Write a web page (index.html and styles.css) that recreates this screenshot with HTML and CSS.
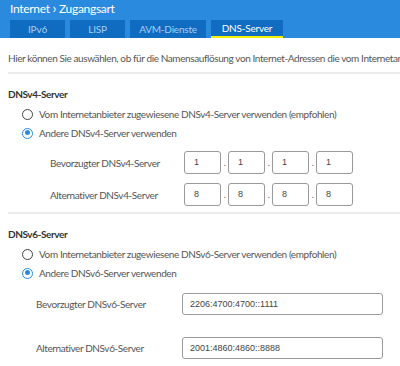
FILE: index.html
```html
<!DOCTYPE html>
<html lang="de">
<head>
    <meta charset="UTF-8">
    <title>Internet - Zugangsart</title>
    <link rel="stylesheet" href="styles.css">
</head>
<body>
    <div class="topbar">
        <div class="crumb">Internet <span class="sep">&#x203A;</span> Zugangsart</div>
        <div class="tabs">
            <div class="tab t-small">IPv6</div>
            <div class="tab t-small">LISP</div>
            <div class="tab t-avm">AVM-Dienste</div>
            <div class="tab t-dns active">DNS-Server</div>
        </div>
    </div>

    <div class="content">
        <div class="intro">Hier können Sie auswählen, ob für die Namensauflösung von Internet-Adressen die vom Internetanbieter zugewiesenen DNS-Server verwendet werden sollen.</div>
        <div class="divider"></div>

        <!-- IPv4 -->
        <div class="block-title">DNSv4-Server</div>
        <div class="radios">
            <label class="radio"><span class="dot"></span>Vom Internetanbieter zugewiesene DNSv4-Server verwenden (empfohlen)</label>
            <label class="radio"><span class="dot checked"></span>Andere DNSv4-Server verwenden</label>
        </div>
        <div class="v4-fields">
            <div class="v4-row">
                <div class="v4-label">Bevorzugter DNSv4-Server</div>
                <div class="octets">
                    <span class="octet">1</span><span class="pt">.</span>
                    <span class="octet">1</span><span class="pt">.</span>
                    <span class="octet">1</span><span class="pt">.</span>
                    <span class="octet">1</span>
                </div>
            </div>
            <div class="v4-row">
                <div class="v4-label">Alternativer DNSv4-Server</div>
                <div class="octets">
                    <span class="octet">8</span><span class="pt">.</span>
                    <span class="octet">8</span><span class="pt">.</span>
                    <span class="octet">8</span><span class="pt">.</span>
                    <span class="octet">8</span>
                </div>
            </div>
        </div>
        <div class="divider"></div>

        <!-- IPv6 -->
        <div class="block-title">DNSv6-Server</div>
        <div class="radios">
            <label class="radio"><span class="dot"></span>Vom Internetanbieter zugewiesene DNSv6-Server verwenden (empfohlen)</label>
            <label class="radio"><span class="dot checked"></span>Andere DNSv6-Server verwenden</label>
        </div>
        <div class="v6-fields">
            <div class="v6-row">
                <div class="v6-label">Bevorzugter DNSv6-Server</div>
                <div class="v6-input">2206:4700:4700::1111</div>
            </div>
            <div class="v6-row">
                <div class="v6-label">Alternativer DNSv6-Server</div>
                <div class="v6-input">2001:4860:4860::8888</div>
            </div>
        </div>
    </div>
</body>
</html>
```

FILE: styles.css
```css
body {
    margin: 0;
    font-family: 'Lato', 'Liberation Sans', sans-serif;
    background-color: #ffffff;
    color: #444444;
    overflow: hidden;
    width: 400px;
}
.topbar {
    background-color: #2a8ade;
    height: 38px;
    padding: 0 10px;
    box-sizing: border-box;
}
.crumb {
    color: #ffffff;
    font-size: 12px;
    letter-spacing: -0.3px;
    line-height: 16px;
    height: 20px;
    white-space: nowrap;
}
.crumb .sep {
    font-size: 14px;
}
.tabs {
    display: flex;
    gap: 5px;
    height: 18px;
}
.tab {
    background-color: #0f6cc1;
    color: #a9cdef;
    font-size: 10px;
    letter-spacing: -0.2px;
    line-height: 18px;
    text-align: center;
    box-sizing: border-box;
}
.t-small { width: 55px; }
.t-avm { width: 76px; }
.t-dns { width: 72px; }
.tab.active {
    color: #ffffff;
    border-bottom: 2px solid #f4f000;
    line-height: 17px;
}
.content {
    padding-left: 8px;
    font-size: 10px;
    letter-spacing: -0.4px;
}
.intro {
    line-height: 16px;
    margin-top: 12px;
    white-space: nowrap;
    color: #555555;
}
.divider {
    height: 2px;
    background-color: #ececec;
    margin-top: 6px;
}
.block-title {
    font-weight: bold;
    line-height: 16px;
    margin-top: 12px;
    color: #333333;
}
.radios {
    display: flex;
    flex-direction: column;
    gap: 3px;
    margin-top: 4px;
    padding-left: 14px;
}
.radio {
    display: flex;
    align-items: center;
    height: 16px;
    color: #555555;
    white-space: nowrap;
}
.dot {
    width: 11px;
    height: 11px;
    border: 1.5px solid #444444;
    border-radius: 50%;
    box-sizing: border-box;
    margin-right: 6px;
    position: relative;
}
.dot.checked {
    border-color: #2a8ade;
}
.dot.checked::after {
    content: "";
    position: absolute;
    left: 1.5px;
    top: 1.5px;
    width: 5px;
    height: 5px;
    border-radius: 50%;
    background-color: #2a8ade;
}
.v4-fields {
    display: flex;
    flex-direction: column;
    gap: 9px;
    margin-top: 10px;
}
.v4-row {
    display: flex;
    align-items: center;
    height: 23px;
}
.v4-label {
    padding-left: 42px;
    box-sizing: border-box;
    width: 176px;
    color: #555555;
}
.octets {
    display: flex;
    align-items: center;
}
.octet {
    width: 37px;
    height: 23px;
    border: 1px solid #9a9a9a;
    border-radius: 3px;
    box-sizing: border-box;
    font-family: 'Liberation Sans', sans-serif;
    font-size: 9px;
    letter-spacing: 0;
    line-height: 21px;
    padding-left: 9px;
    color: #444444;
}
.pt {
    width: 7px;
    text-align: center;
    font-size: 9px;
    color: #666666;
}
.v6-fields {
    display: flex;
    flex-direction: column;
    gap: 22px;
    margin-top: 12px;
}
.v6-row {
    display: flex;
    align-items: center;
    height: 22px;
}
.v6-label {
    padding-left: 28px;
    width: 174px;
    box-sizing: border-box;
    color: #555555;
}
.v6-input {
    width: 201px;
    height: 22px;
    border: 1px solid #9a9a9a;
    border-radius: 3px;
    box-sizing: border-box;
    font-family: 'Liberation Sans', sans-serif;
    font-size: 9px;
    letter-spacing: 0;
    line-height: 20px;
    padding-left: 7px;
    color: #444444;
}
```
